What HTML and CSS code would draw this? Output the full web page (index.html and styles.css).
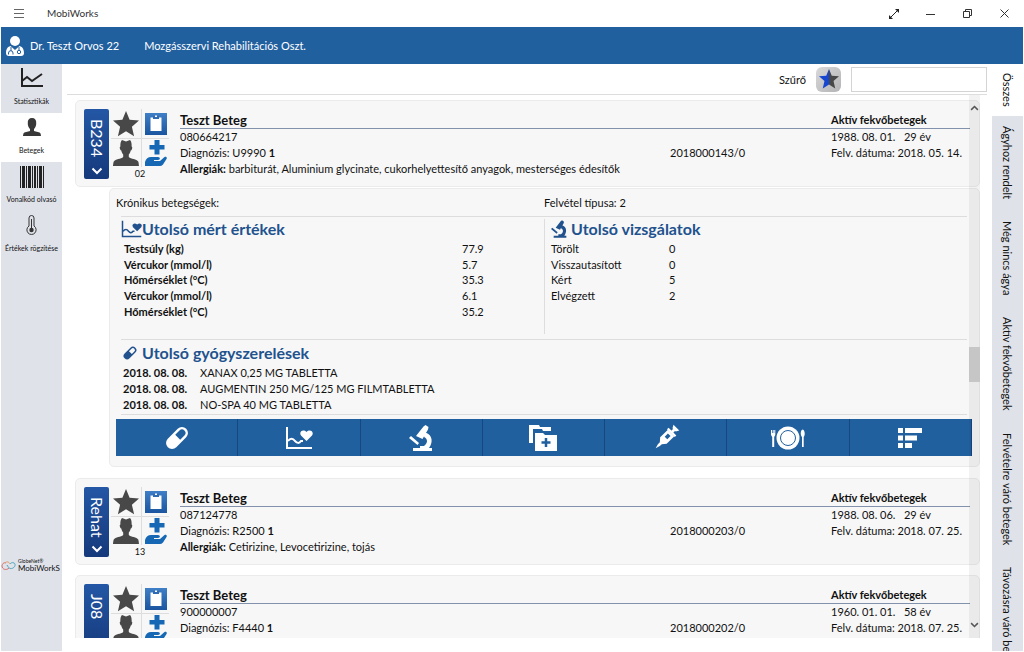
FILE: index.html
```html
<!DOCTYPE html>
<html lang="hu">
<head>
<meta charset="utf-8">
<title>MobiWorks</title>
<link rel="stylesheet" href="styles.css">
</head>
<body>
<svg class="defs" width="0" height="0" aria-hidden="true">
  <defs>
    <linearGradient id="blue" x1="0" y1="0" x2="0" y2="1"><stop offset="0" stop-color="#3f7fc6"/><stop offset="1" stop-color="#1b55a0"/></linearGradient>
  </defs>
  <symbol id="star" viewBox="0 0 26 26"><path fill="#484848" d="M13 0l3.6 8.7 9.4.8-7.1 6.2 2.2 9.6-8.1-5-8.1 5 2.2-9.6L0 9.500l9.400-.8z"/></symbol>
  <symbol id="clip" viewBox="0 0 22 22"><path fill="url(#blue)" d="M0 0h22v22H0z"/><path fill="#fff" d="M5.500 4.500h11v13.500h-11z"/><path fill="#2f6cb3" d="M8 3h6v3H8z"/><path fill="#fff" d="M10 2.500h2v1.500h-2z"/></symbol>
  <symbol id="man" viewBox="0 0 26 26"><path fill="#484848" d="M9 0l4 1.500L17 0c1.500 1.500 1.800 4 1.600 6.500.9.300.8 1.500.3 2.700-.3.900-.7 1.300-1.200 1.300-.3 1.800-1 3.100-1.900 4v2.500c2 2 8 2 9.400 4.500.6 1.200.8 4.500.8 4.500H0s.2-3.300.8-4.500C2.200 19 8.200 19 10.200 17v-2.500c-.9-.9-1.600-2.200-1.900-4-.5 0-.9-.4-1.200-1.300-.5-1.200-.6-2.400.3-2.700C7.200 4 7.500 1.500 9 0z"/></symbol>
  <symbol id="care" viewBox="0 0 22 26"><path fill="#1668b4" d="M9.500 0h5v5h5v4.500h-5v5h-5v-5h-5V5h5zM0 26v-4c1-3.500 3-5 6-5h7c2.500 0 2.500 3 0 3H9v1h6l4.500-4c1.500-1 3 .5 2 2L18 24.500c-1 1-2 1.500-3 1.500z"/></symbol>
  <symbol id="down" viewBox="0 0 12 8"><path fill="none" stroke="currentColor" stroke-width="2" d="M1.500 1.500L6 6l4.500-4.500"/></symbol>
  <symbol id="pill" viewBox="0 0 24 24"><g transform="rotate(45 12 12)"><rect x="6" y="-1" width="12" height="26" rx="6" fill="currentColor"/><path fill="var(--hole)" d="M8.500 11V5a3.500 3.500 0 0 1 7 0v6z"/></g></symbol>
  <symbol id="heart" viewBox="0 0 28 24"><path fill="none" stroke="currentColor" stroke-width="2" d="M2 1v21h25M3 15c2-3 5-3 7 0 2 2 4 3 6 0h2"/><path fill="currentColor" d="M21.500 15L16 9.500C13.500 6 18 2.500 21.500 6c3.500-3.500 8 0 5.500 3.500z"/></symbol>
  <symbol id="scope" viewBox="0 0 24 26"><path fill="currentColor" d="M14.500 1.500l2-1.500 3 2-.5 2.500L13.500 14 7 11zM2 11l8 7-1.500 2L0 13zM4 23h19v3H4zM16.500 7.500C24 10 24 18 20 23h-9v-2h4c4-3 4-7 0-9z"/></symbol>
  <symbol id="folder" viewBox="0 0 28 26"><path fill="currentColor" d="M0 0h10l1 2h11v4h-8l-1-2H4v14H0z"/><path fill="currentColor" d="M6 8h8l2 2h12v16H6z"/><path fill="none" stroke="var(--hole)" stroke-width="2.500" d="M17 13v9M12.500 17.500h9"/></symbol>
  <symbol id="syringe" viewBox="0 0 24 24"><g transform="rotate(45 12 12)" fill="currentColor"><path d="M7 4.500h10V16l-3.500 4v3L12 28l-1.500-5v-3L7 16zM6 2h12v2.500H6zM10.500-1h3v4h-3zM7.500-4h9l-2 3.500h-5z"/><path fill="var(--hole)" d="M10 7h4v5h-4z"/></g></symbol>
  <symbol id="plate" viewBox="0 0 34 24"><circle cx="17" cy="12" r="11.500" fill="currentColor"/><circle cx="17" cy="12" r="7.500" fill="none" stroke="var(--hole)"/><path fill="currentColor" d="M0 4h1v3h.7V4h1v3h.6V4h1v5L3.200 11v10H1.200V11L0 9zM31 21V11c-2-2-1.500-7 .7-7.500 2.300.5 2.700 5.500 1 7.500v10z"/></symbol>
  <symbol id="bars" viewBox="0 0 24 20"><path fill="currentColor" d="M0 0h5v5H0zM7 0h17v5H7zM0 7.500h5v5H0zM7 7.500h12v5H7zM0 15h5v5H0zM7 15h7v5H7z"/></symbol>
</svg>

<header class="titlebar">
  <button class="menu" aria-label="Menü"><svg width="10" height="9" viewBox="0 0 10 9"><path stroke="#666" d="M0 .5h10M0 4.500h10M0 8.500h10"/></svg></button>
  <span class="app-name">MobiWorks</span>
  <div class="window-buttons">
    <button aria-label="Teljes képernyő"><svg width="10" height="10" viewBox="0 0 10 10"><path stroke="#222" d="M1 9l8-8"/><path fill="#222" d="M6 0h4v4zM0 6v4h4z"/></svg></button>
    <button aria-label="Kis méret"><svg width="9" height="10" viewBox="0 0 9 10"><path stroke="#333" d="M0 5.500h9"/></svg></button>
    <button aria-label="Előző méret"><svg width="9" height="9" viewBox="0 0 9 9"><path fill="none" stroke="#333" d="M.5 2.500h6v6h-6zM2.500 2V.5h6v6H7"/></svg></button>
    <button aria-label="Bezárás"><svg width="9" height="9" viewBox="0 0 9 9"><path stroke="#333" d="M.5.5l8 8M8.500.5l-8 8"/></svg></button>
  </div>
</header>

<div class="userbar">
  <svg width="18" height="20" viewBox="0 0 18 20"><circle cx="9" cy="5" r="5" fill="#fff"/><path fill="#fff" d="M4.500 10L9 14l4.500-4C17 11 18 14 18 17c0 2-1 3-3 3H3c-2 0-3-1-3-3 0-3 1-6 4.500-7z"/><path fill="none" stroke="#21609f" d="M5 11v4M2.500 18.500v-1.500a2.200 2.200 0 0 1 4.500 0v1.500M13 11v3"/><circle cx="13" cy="16" r="1.700" fill="none" stroke="#21609f"/></svg>
  <span class="user">Dr. Teszt Orvos 22</span>
  <span>Mozgásszervi Rehabilitációs Oszt.</span>
</div>

<div class="workspace">
  <nav class="sidebar">
    <button class="nav-item"><svg width="24" height="20" viewBox="0 0 24 20"><path fill="none" stroke="#222" stroke-width="2" d="M2 0v18h21"/><path fill="none" stroke="#222" stroke-width="2" d="M2 13l5-4 5 4 10-7"/></svg><span>Statisztikák</span></button>
    <button class="nav-item selected"><svg width="18" height="20" viewBox="0 0 18 20"><path fill="#383838" d="M9 1c3 0 4.500 2 4.200 5 .3 2-1 5-2.200 6v2c2 1 6 1 6.500 2.500.3.800.5 2.500.5 2.500H0s.200-1.700.5-2.500C1 15 5 15 7 14v-2C5.800 11 4.500 8 4.800 6 4.500 3 6 1 9 1z"/></svg><span>Betegek</span></button>
    <button class="nav-item"><svg width="24" height="22" viewBox="0 0 24 22"><path fill="#222" d="M0 0h1v22H0zM2 0h3v22H2zM6 0h1v22H6zM8 0h3v22H8zM12 0h1v22h-1zM14 0h2v22h-2zM17 0h1v22h-1zM19 0h3v22h-3zM23 0h1v22h-1z"/></svg><span>Vonalkód olvasó</span></button>
    <button class="nav-item"><svg width="12" height="20" viewBox="0 0 12 20"><path fill="none" stroke="#333" d="M3 11V3a2.500 2.500 0 0 1 5 0v8a4.600 4.600 0 1 1-5 0z"/><path stroke="#333" d="M5.500 4v10"/><circle cx="5.500" cy="15" r="2.200" fill="#333"/></svg><span>Értékek rögzítése</span></button>
    <div class="brand">
      <svg width="15" height="10" viewBox="0 0 15 10" fill="none"><path stroke="#db6a67" d="M8 7C5 10 1 8 1 5c0-2 2-4 4-3"/><path stroke="#df9b62" d="M4 2c2-2 4-1 5 1"/><path stroke="#4ba6bd" d="M6 4c2 4 4 4 6 3s3-4 1-5-3 0-4 1"/></svg>
      <div><small>GlobeNet®</small><b>MobiWorkS</b></div>
    </div>
  </nav>

  <main class="content">
    <div class="filter">
      <label for="filter">Szűrő</label>
      <button class="fav" aria-label="Kedvencek"><svg width="20" height="20" viewBox="0 0 26 26"><path fill="#484848" d="M13 0l3.600 8.700 9.400.8-7.100 6.200 2.200 9.600-8.100-5z"/><path fill="#1746d0" d="M13 0v20.300l-8.100 5 2.200-9.600L0 9.500l9.400-.8z"/></svg></button>
      <input id="filter" type="text">
    </div>
    <div class="list-frame">
      <div class="list">
        <article class="card">
          <button class="room"><span>B234</span><svg width="12" height="8"><use href="#down"/></svg></button>
          <div class="status"><div class="icons">
            <svg width="26" height="26"><use href="#star"/></svg><svg width="22" height="22"><use href="#clip"/></svg>
            <svg width="26" height="26"><use href="#man"/></svg><svg width="22" height="26"><use href="#care"/></svg>
          </div><span>02</span></div>
          <div class="info">
            <div class="cols head"><h2>Teszt Beteg</h2><strong class="last">Aktív fekvőbetegek</strong></div>
            <div class="cols"><span>080664217</span><span class="last">1988. 08. 01. &nbsp; 29 év</span></div>
            <div class="cols"><span>Diagnózis: U9990 <b>1</b></span><span>2018000143/0</span><span class="last">Felv. dátuma: 2018. 05. 14.</span></div>
            <p><b>Allergiák:</b> barbiturát, Aluminium glycinate, cukorhelyettesítő anyagok, mesterséges édesítők</p>
          </div>
        </article>

        <section class="details">
          <div class="halves intro"><span>Krónikus betegségek:</span><span>Felvétel típusa: 2</span></div>
          <div class="halves values">
            <div class="measures">
              <h3><svg width="21" height="18"><use href="#heart"/></svg>Utolsó mért értékek</h3>
              <table>
                <tr><th>Testsúly (kg)</th><td>77.9</td></tr>
                <tr><th>Vércukor (mmol/l)</th><td>5.7</td></tr>
                <tr><th>Hőmérséklet (°C)</th><td>35.3</td></tr>
                <tr><th>Vércukor (mmol/l)</th><td>6.1</td></tr>
                <tr><th>Hőmérséklet (°C)</th><td>35.2</td></tr>
              </table>
            </div>
            <div class="exams">
              <h3><svg width="16" height="18"><use href="#scope"/></svg>Utolsó vizsgálatok</h3>
              <table>
                <tr><th>Törölt</th><td>0</td></tr>
                <tr><th>Visszautasított</th><td>0</td></tr>
                <tr><th>Kért</th><td>5</td></tr>
                <tr><th>Elvégzett</th><td>2</td></tr>
              </table>
            </div>
          </div>
          <div class="meds">
            <h3><svg width="14" height="14"><use href="#pill"/></svg>Utolsó gyógyszerelések</h3>
            <table>
              <tr><th>2018. 08. 08.</th><td>XANAX 0,25 MG TABLETTA</td></tr>
              <tr><th>2018. 08. 08.</th><td>AUGMENTIN 250 MG/125 MG FILMTABLETTA</td></tr>
              <tr><th>2018. 08. 08.</th><td>NO-SPA 40 MG TABLETTA</td></tr>
            </table>
          </div>
          <div class="toolbar">
            <button aria-label="Gyógyszerelés"><svg width="24" height="24"><use href="#pill"/></svg></button>
            <button aria-label="Mért értékek"><svg width="28" height="24"><use href="#heart"/></svg></button>
            <button aria-label="Vizsgálatok"><svg width="24" height="26"><use href="#scope"/></svg></button>
            <button aria-label="Dokumentumok"><svg width="28" height="26"><use href="#folder"/></svg></button>
            <button aria-label="Injekció"><svg class="wide" width="22" height="22" viewBox="0 0 24 24"><use href="#syringe" width="24" height="24"/></svg></button>
            <button aria-label="Étkezés"><svg width="34" height="24"><use href="#plate"/></svg></button>
            <button aria-label="Lista"><svg width="24" height="20"><use href="#bars"/></svg></button>
          </div>
        </section>

        <article class="card">
          <button class="room"><span>Rehat</span><svg width="12" height="8"><use href="#down"/></svg></button>
          <div class="status"><div class="icons">
            <svg width="26" height="26"><use href="#star"/></svg><svg width="22" height="22"><use href="#clip"/></svg>
            <svg width="26" height="26"><use href="#man"/></svg><svg width="22" height="26"><use href="#care"/></svg>
          </div><span>13</span></div>
          <div class="info">
            <div class="cols head"><h2>Teszt Beteg</h2><strong class="last">Aktív fekvőbetegek</strong></div>
            <div class="cols"><span>087124778</span><span class="last">1988. 08. 06. &nbsp; 29 év</span></div>
            <div class="cols"><span>Diagnózis: R2500 <b>1</b></span><span>2018000203/0</span><span class="last">Felv. dátuma: 2018. 07. 25.</span></div>
            <p><b>Allergiák:</b> Cetirizine, Levocetirizine, tojás</p>
          </div>
        </article>

        <article class="card">
          <button class="room"><span>J08</span><svg width="12" height="8"><use href="#down"/></svg></button>
          <div class="status"><div class="icons">
            <svg width="26" height="26"><use href="#star"/></svg><svg width="22" height="22"><use href="#clip"/></svg>
            <svg width="26" height="26"><use href="#man"/></svg><svg width="22" height="26"><use href="#care"/></svg>
          </div></div>
          <div class="info">
            <div class="cols head"><h2>Teszt Beteg</h2><strong class="last">Aktív fekvőbetegek</strong></div>
            <div class="cols"><span>900000007</span><span class="last">1960. 01. 01. &nbsp; 58 év</span></div>
            <div class="cols"><span>Diagnózis: F4440 <b>1</b></span><span>2018000202/0</span><span class="last">Felv. dátuma: 2018. 07. 25.</span></div>
            <p><b>Allergiák:</b> tartósítószerek, növényi rostok, Esomeprazole, földimogyoró, méhméreg</p>
          </div>
        </article>
      </div>
      <div class="scrollbar" aria-hidden="true">
        <svg class="up" width="9" height="6"><use href="#down"/></svg>
        <div class="thumb"></div>
        <svg width="9" height="6"><use href="#down"/></svg>
      </div>
    </div>
  </main>

  <nav class="tabs">
    <button class="selected">Összes</button>
    <button>Ágyhoz rendelt</button>
    <button>Még nincs ágya</button>
    <button>Aktív fekvőbetegek</button>
    <button>Felvételre váró betegek</button>
    <button>Távozásra váró betegek</button>
  </nav>
</div>
</body>
</html>
```
FILE: styles.css
```css
* { box-sizing: border-box; }
body {
  margin: 0;
  height: 100vh;
  display: flex;
  flex-direction: column;
  overflow: hidden;
  background: #fff;
  color: #111;
  font: 11px/15px Lato, Carlito, sans-serif;
}
button { border: 0; padding: 0; background: none; font: inherit; color: inherit; }
svg { display: block; flex: none; }
.defs { position: absolute; }
h2, h3, p { margin: 0; }

.titlebar { display: flex; align-items: center; height: 27px; flex: none; padding-right: 1px; }
.menu { width: 37px; display: grid; place-items: center; }
.app-name { margin-left: 10px; font-size: 10px; color: #333; }
.window-buttons { margin-left: auto; display: flex; }
.window-buttons button { width: 37px; height: 27px; display: grid; place-items: center; }

.userbar {
  display: flex; align-items: center; flex: none;
  height: 37px; margin: 0 1px; padding-left: 5px;
  background: #21609f; color: #fff;
}
.user { margin: 0 25px 0 6px; }

.workspace { flex: 1; min-height: 0; display: flex; padding: 0 1px 1px; }
.sidebar { width: 61px; flex: none; display: flex; flex-direction: column; background: #dfe2e9; }
.nav-item {
  height: 49px; padding: 4px 0 7px;
  display: flex; flex-direction: column; align-items: center; justify-content: space-between;
  font-size: 7px; line-height: 10px; white-space: nowrap;
}
.nav-item.selected { background: #fff; }
.brand { display: flex; align-items: center; gap: 2px; margin: auto 0 79px; }
.brand small, .brand b { display: block; font-weight: 400; }
.brand small { font-size: 5px; line-height: 5px; }
.brand b { font-size: 8px; line-height: 8px; }

.content { flex: 1; min-width: 0; display: flex; flex-direction: column; padding: 0 5px 13px; }
.filter {
  display: flex; align-items: center; justify-content: flex-end;
  height: 31px; flex: none; border-bottom: 1px solid #ddd;
}
.fav {
  width: 25px; height: 25px; margin: 0 10px; border-radius: 6px;
  display: grid; place-items: center; background: linear-gradient(135deg, #d9d9da, #b3b3b5);
}
.filter input { width: 136px; height: 25px; border: 1px solid #d4d4d4; background: #fff; font: inherit; }

.list-frame { position: relative; flex: 1; min-height: 0; padding: 0 7px 0 8px; }
.list { height: 100%; overflow: hidden; padding-top: 5px; }
.card {
  display: flex; height: 87px; margin-bottom: 10px; padding: 8px 9px 0 8px;
  border: 1px solid #ebebeb; border-radius: 5px; background: #f7f7f7;
}
.room {
  width: 25px; height: 70px; padding: 10px 0 4px; border-radius: 2px; flex: none;
  display: flex; flex-direction: column; align-items: center; justify-content: space-between;
  background: linear-gradient(#2357a5, #15397b); color: #fff; font-size: 16px;
}
.room span { writing-mode: vertical-rl; line-height: 20px; }
.status { width: 60px; flex: none; margin: 0 9px 0 2px; text-align: center; }
.status span { display: block; padding-right: 2px; font-size: 9px; line-height: 12px; }
.icons {
  display: grid; grid-template: 29px 29px / 30px 30px; place-items: center; height: 59px;
  background:
    linear-gradient(#ddd, #ddd) 0 29px / 58px 1px no-repeat,
    linear-gradient(#ddd, #ddd) 30px 0 / 1px 58px no-repeat;
}
.info { flex: 1; min-width: 0; line-height: 16px; white-space: nowrap; }
.cols { display: grid; grid-template-columns: 1fr 161px 139px; }
.cols .last { grid-column: 3; }
.head { height: 20px; align-items: end; border-bottom: 1px solid #8291ac; }
.head h2 { font-size: 13px; line-height: 16px; }
.info > :last-child { line-height: 15px; }

.details {
  margin: -9px 0 11px 34px; padding: 6px 7px 10px 6px;
  border: 1px solid #ebebeb; border-radius: 5px; background: #f7f7f7;
}
.halves { display: grid; grid-template-columns: 1fr 1fr; }
.intro { height: 21px; }
.values { margin: 0 5px; padding: 2px 0 5px; border: solid #ddd; border-width: 1px 0; }
h3 { display: flex; align-items: center; height: 20px; margin-bottom: 2px; color: #21528e; font-size: 16px; line-height: 20px; --hole: #f7f7f7; }
table { border-collapse: collapse; }
th, td { padding: 0; text-align: left; line-height: 15px; }
.measures { height: 115px; }
.measures table { height: 78px; margin-left: 3px; }
.measures th { width: 338px; }
.exams { padding-left: 6px; border-left: 1px solid #ddd; }
.exams h3 { gap: 4px; }
.exams table { height: 62px; }
.exams th { width: 118px; font-weight: 400; }
.meds { margin: 0 5px; padding: 3px 2px 2px; border-bottom: 1px solid #ddd; }
.meds h3 { gap: 5px; }
.meds table { height: 47px; }
.meds th { width: 77px; }
.toolbar { display: grid; grid-template-columns: repeat(7, 1fr); margin-top: 4px; height: 37px; background: #21609f; color: #fff; --hole: #21609f; }
.toolbar button { display: grid; place-items: center; border-right: 1px solid #174780; }
.wide, symbol { overflow: visible; }

.scrollbar {
  position: absolute; inset: 0 7px 0 auto; width: 11px; padding: 10px 0;
  display: flex; flex-direction: column; align-items: center;
  background: rgba(0, 0, 0, .05); color: #555;
}
.up { transform: rotate(180deg); }
.thumb { width: 11px; height: 35px; margin: 236px 0 auto; background: #c6c6c6; }

.tabs { width: 31px; flex: none; display: flex; flex-direction: column; overflow: hidden; background: #dfe2e9; }
.tabs button { writing-mode: vertical-rl; flex: none; width: 31px; padding: 10px 0 12px; text-align: left; white-space: nowrap; }
.tabs .selected { padding: 9px 0; background: #fff; }
```
